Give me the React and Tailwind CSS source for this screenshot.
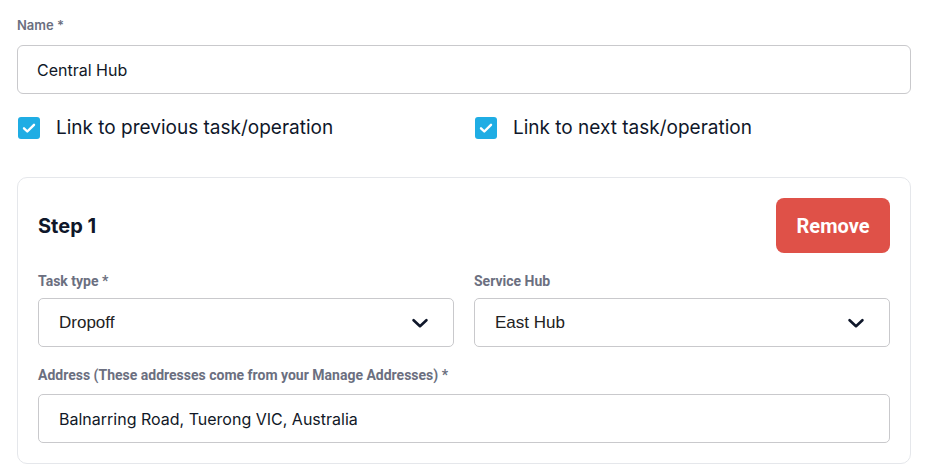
import React from "react";

const Check = () => (
  <span className="flex h-[22px] w-[22px] items-center justify-center rounded-[3px] bg-[#1fade4]">
    <svg width="16" height="16" viewBox="0 0 16 16" fill="none">
      <path d="M3 8.3l3.3 3.2L13 4.8" stroke="white" strokeWidth="2.4" strokeLinecap="round" strokeLinejoin="round" />
    </svg>
  </span>
);

const Chevron = () => (
  <svg width="16" height="10" viewBox="0 0 16 10" fill="none">
    <path d="M1.6 2.2l6.4 6 6.4-6" stroke="#0f172a" strokeWidth="2.6" strokeLinecap="round" strokeLinejoin="round" />
  </svg>
);

const Select = ({ value }) => (
  <div className="flex h-[49px] items-center justify-between rounded-[5px] border border-[#c9c9cc] pl-[20px] pr-[25px]">
    <span className="text-[17px] text-[#222] font-['Liberation_Sans',sans-serif]">{value}</span>
    <Chevron />
  </div>
);

const Label = ({ children }) => (
  <div className="text-[14px] font-bold text-[#6b6f80] font-['Roboto',sans-serif] leading-[18px]">{children}</div>
);

export default function App() {
  return (
    <div className="h-[471px] w-[930px] bg-white pl-[17px] pr-[19px] pt-[16px] font-['Inter',sans-serif]">
      <div className="text-[13px] font-semibold text-[#6b6f80] leading-[18px]">Name *</div>
      <div className="mt-[11px] flex h-[49px] items-center rounded-[6px] border border-[#c9c9cc] px-[19px] text-[16px] text-[#111827]">
        Central Hub
      </div>
      <div className="mt-[23px] flex h-[22px] items-center">
        <label className="flex w-[458px] items-center gap-[16px] pl-[1px]">
          <Check />
          <span className="text-[19px] text-[#0f172a]">Link to previous task/operation</span>
        </label>
        <label className="flex items-center gap-[16px]">
          <Check />
          <span className="text-[19px] text-[#0f172a]">Link to next task/operation</span>
        </label>
      </div>
      <div className="mt-[38px] rounded-[10px] border border-[#e5e7eb] px-[20px] pt-[20px] pb-[20px]">
        <div className="flex items-center justify-between">
          <div className="text-[20px] font-bold text-[#0f172a]">Step 1</div>
          <button className="h-[55px] w-[114px] rounded-[8px] bg-[#df5148] text-[20px] font-bold text-white font-['Roboto',sans-serif]">
            Remove
          </button>
        </div>
        <div className="mt-[19px] grid grid-cols-2 gap-x-[20px]">
          <div>
            <Label>Task type *</Label>
            <div className="mt-[8px]"><Select value="Dropoff" /></div>
          </div>
          <div>
            <Label>Service Hub</Label>
            <div className="mt-[8px]"><Select value="East Hub" /></div>
          </div>
        </div>
        <div className="mt-[19px]">
          <Label>Address (These addresses come from your Manage Addresses) *</Label>
          <div className="mt-[10px] flex h-[49px] items-center rounded-[5px] border border-[#c9c9cc] px-[20px] text-[16px] text-[#111827]">
            Balnarring Road, Tuerong VIC, Australia
          </div>
        </div>
      </div>
    </div>
  );
}
